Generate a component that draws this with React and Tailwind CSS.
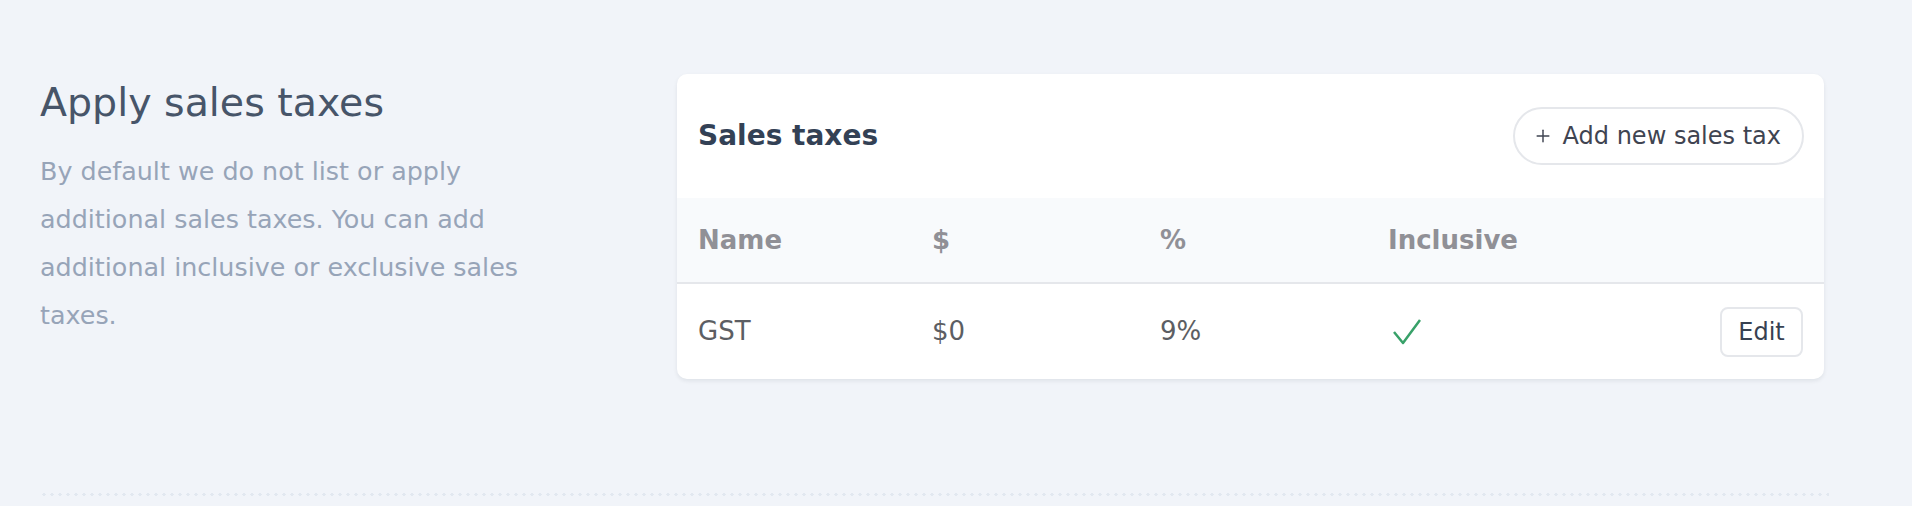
import { Plus } from "lucide-react";

function CheckMark() {
    return (
        <svg width="28" height="27" viewBox="0 0 28 27" fill="none" className="ml-[5px]">
            <path d="M1 14 L10 25 L27 2" stroke="#38a169" strokeWidth="2.5" strokeLinejoin="round" />
        </svg>
    );
}

export default function App() {
    const taxes = [{ name: "GST", amount: "$0", rate: "9%", inclusive: true }];

    return (
        <div className="min-h-screen w-full bg-[#f1f4f9] font-['DejaVu_Sans',sans-serif] pt-[74px]">
            <div className="flex pl-[40px]">
                <div className="w-[637px] shrink-0 pt-[4px]">
                    <h2 className="text-[39.5px] leading-[48px] text-[#475569]">Apply sales taxes</h2>
                    <p className="mt-[21px] max-w-[530px] text-[25.4px] leading-[48px] text-[#97a4b8]">
                        By default we do not list or apply additional sales taxes. You can add additional inclusive or exclusive sales taxes.
                    </p>
                </div>

                <div className="w-[1147px] shrink-0 bg-white rounded-[10px] shadow-[0_2px_4px_rgba(15,23,42,0.08)] overflow-hidden">
                    <div className="h-[124px] flex items-center justify-between pl-[21px] pr-[20px]">
                        <h3 className="text-[28px] font-bold text-[#334155]">Sales taxes</h3>
                        <button
                            type="button"
                            className="h-[58px] flex items-center gap-[10px] pl-[18px] pr-[21px] rounded-full border-2 border-[#e5e7eb] bg-white text-[24px] text-[#3f4451]"
                        >
                            <Plus size={20} strokeWidth={1.75} />
                            Add new sales tax
                        </button>
                    </div>

                    <div className="h-[86px] grid grid-cols-[234px_228px_228px_1fr] items-center bg-[#f8fafc] border-b-2 border-[#e5e7eb] text-[26px] font-bold text-[#909096]">
                        <div className="pl-[21px]">Name</div>
                        <div className="pl-[21px]">$</div>
                        <div className="pl-[21px]">%</div>
                        <div className="pl-[21px]">Inclusive</div>
                    </div>

                    {taxes.map((tax) => (
                        <div
                            key={tax.name}
                            className="h-[95px] grid grid-cols-[234px_228px_228px_1fr] items-center text-[26px] text-[#5c5e63]"
                        >
                            <div className="pl-[21px]">{tax.name}</div>
                            <div className="pl-[21px]">{tax.amount}</div>
                            <div className="pl-[21px]">{tax.rate}</div>
                            <div className="pl-[21px] pr-[21px] flex items-center justify-between">
                                {tax.inclusive ? <CheckMark /> : <span />}
                                <button
                                    type="button"
                                    className="h-[50px] w-[83px] rounded-[8px] border-2 border-[#e5e7eb] bg-white text-[24px] text-[#374151]"
                                >
                                    Edit
                                </button>
                            </div>
                        </div>
                    ))}
                </div>
            </div>

            <div className="ml-[40px] mt-[114px] w-[1789px] h-[3px] bg-[radial-gradient(circle,#e2e8f0_1.5px,transparent_1.6px)] bg-[length:8px_3px]" />
        </div>
    );
}
